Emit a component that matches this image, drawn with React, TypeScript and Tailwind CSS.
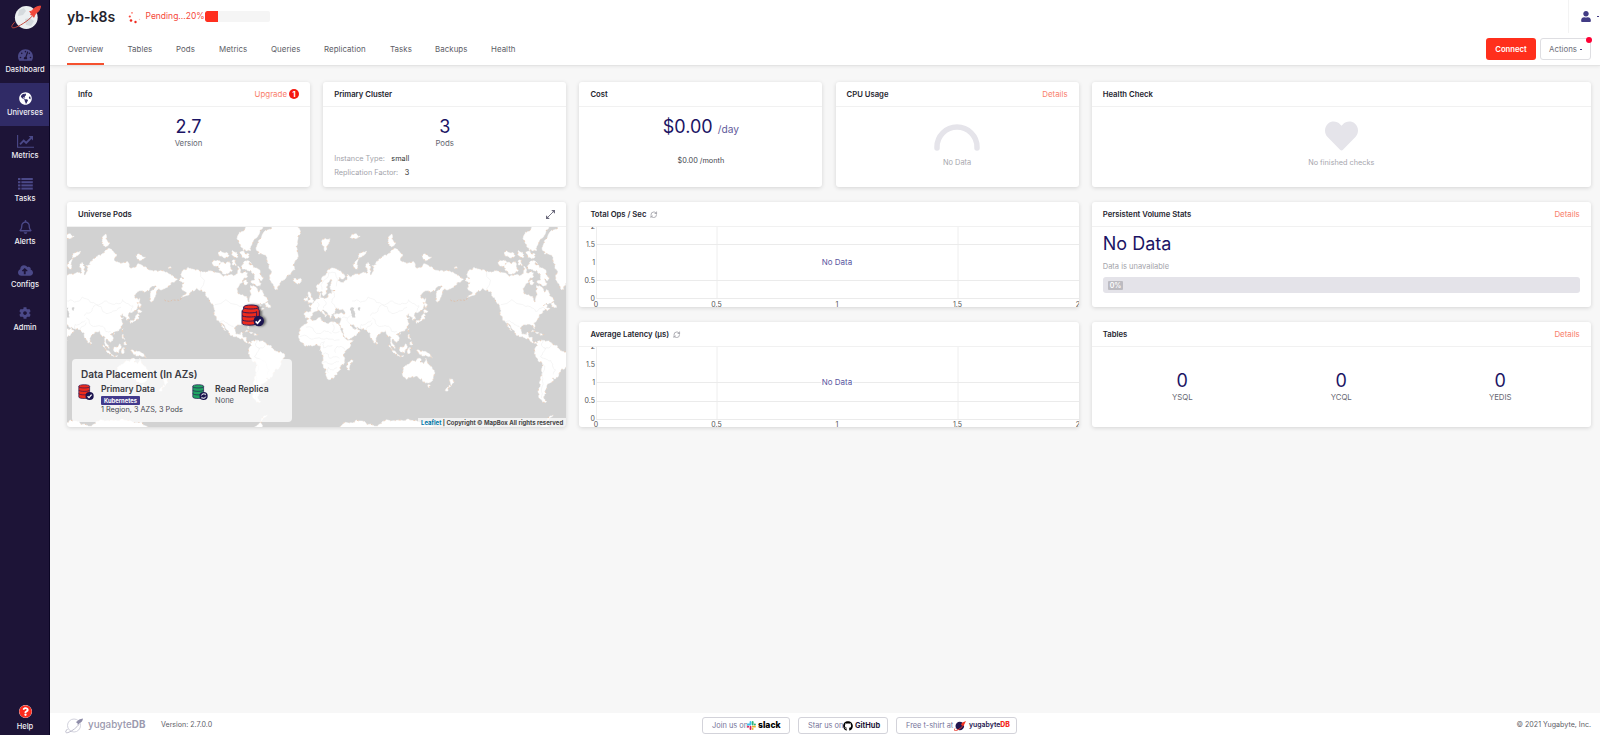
import React from "react";
import { FaTachometerAlt, FaGlobeAmericas, FaRegBell, FaCloudUploadAlt, FaCog, FaQuestionCircle, FaUser, FaHeart, FaGithub } from "react-icons/fa";
import { RefreshCw } from "lucide-react";

type Pt = [number, number];

const MAP_W = 499;
const MAP_H = 201;
const SCALE = 286 / 360;
const ORIGIN_X = 245.5;
const EQUATOR_Y = 122.5;
const RADIUS = 286 / (2 * Math.PI);

// Coastlines as flat "lon lat" lists, projected with Web Mercator.
const LAND: string[] = [
  // North and Central America
  "-168 65.6 -164 66.5 -162 66.2 -166 68.3 -161 70.3 -156.5 71.3 -150 70.5 -141 69.6 -135 69.3 -129 70 -124 69.5 -117 68.9 -114 67.8 -108 67.9 -104 68 -98 67.8 -96 68.3 -94 71.8 -91 69.5 -88 68.7 -85 69.7 -82 69 -82 67 -87 66.5 -88 64.3 -93 62 -94.5 60 -94.5 58.8 -92.5 57 -88 56.5 -82.5 55.2 -82 53 -80 51.3 -79 52 -79 54.5 -76.7 56.5 -78.4 58.8 -77.5 61 -78 62.4 -74 62.3 -70 61 -68 58.6 -65 60 -62 57.5 -61 55.8 -57.5 54.5 -56 52.3 -60 50.2 -66 50.2 -69 48.3 -65 48.8 -65 46.5 -61 45.5 -65 43.7 -67 45 -70.5 43.3 -70 41.7 -74 40.7 -75.5 38 -76 35.4 -81 32 -80 27 -81 25.2 -83 29.3 -85.5 29.8 -89.5 30 -94 29.5 -97.4 27.5 -97.8 22.5 -95.5 18.7 -91 18.8 -90 21.2 -87 21.4 -88.3 17.8 -88 15.8 -83.4 15 -83.7 11 -81.5 9 -79 9.5 -77 8.3 -78 7.5 -80 7.4 -83 8.3 -86 11 -88 13 -92.5 14.5 -96 15.8 -101 17.3 -105.5 20.3 -106 23 -109.5 26 -113 31 -114.7 31.7 -112 28 -109.5 23.2 -112 25.5 -114.5 28 -117 32.5 -120.5 34.5 -124 40 -124.3 47 -128 51 -130.5 54.5 -135 58.3 -140 59.8 -146 60.7 -151.5 59.3 -154 58 -161 55.3 -165 54.5 -158 57.8 -162 59 -165 61 -164 63.2 -161 64",
  // Greenland
  "-44 59.9 -48.5 61.2 -52 64 -53.7 67.2 -51 69.5 -54.5 70.8 -55 72.6 -58.5 75.5 -68 76 -71 77.5 -68 79.5 -62 81.2 -50 82.5 -34 83.6 -20 82.6 -15 81.4 -19 79.5 -19 76.5 -21 74 -24 72 -22 70.5 -27 68.5 -34 66.3 -39 65.2 -41.5 62.8",
  // Canadian Arctic
  "-62 67 -66 68.5 -68 70.5 -75 72 -80 73.7 -86 73.5 -89.5 71 -82 70 -78 70 -73 68 -73 65.5 -78 64.5 -72 63 -66 62.2 -65 63.5 -68 66 -64 65.2",
  "-105 73.5 -114 73.3 -118.5 71.5 -117 70 -113 68.6 -105 69 -101 70",
  "-125 72 -124.5 74 -119 74 -115.5 73.4 -120 71.5",
  "-92 76.5 -89 75 -80 75 -80 76 -86 76.5 -90 78 -95 80 -92 81.3 -80 83 -66 83 -62 82.3 -68 80.7 -75 79 -78 77 -85 77.3",
  "-118 75.5 -116 77 -108 76.5 -105 75.5 -110 74.7",
  "-95.5 72 -97 74 -101 73.8 -101 72.3", "-99 75 -101 77 -96 76.6 -94 75",
  "-80 73 -77 73 -77 72.4 -80 72.4", "-87 63.5 -84 65.9 -81 64 -84 62.8",
  "-59 47.7 -57 51.4 -53 48.5 -53 46.7",
  "-85 22 -81 23.2 -76 21 -74.5 20.2 -78 20 -82 22.3", "-74 18.2 -72.5 19.8 -68.5 18.6 -71.5 17.8",
  // South America
  "-77.5 8.3 -75 10.8 -72 12.2 -71.5 11 -68 11.3 -62 10.7 -60 8.5 -57 6 -52 4.8 -50 1 -48 -0.8 -44.5 -2.5 -40 -2.9 -35.3 -5.5 -35 -8.5 -39 -13.5 -39.5 -18 -41.5 -22.4 -46.5 -24.2 -48.7 -28 -52 -33 -54.5 -34.8 -58 -34.2 -57 -37 -62 -39 -65 -41 -65 -44 -67.5 -46 -66 -48 -69 -51 -68.5 -53 -65.5 -54.8 -70 -55.3 -74 -52.5 -75.5 -48 -73 -42 -73.6 -37 -71.5 -31 -70.3 -19 -76 -14 -79 -8 -81.2 -5 -80 -2.5 -80 1 -77.5 4",
  // Eurasia
  "-9.3 38.7 -9 43 -2 43.4 -1.3 46 -4.5 48.3 -1.5 48.8 2 51 5 53.3 8.5 54 8.3 57 10.6 57.6 10 54.8 14 54 19 54.5 21.5 57.5 24 57.5 24 59.2 29.5 60 23 60 21.5 61.5 25 65 22 65.7 17.5 61.5 18.5 60 16.5 57 14 55.5 12.5 56.5 11 59 8 58 5.5 59 5 62 10 64 14 67.5 19 70 25.5 71 31 70.2 41 67.3 39 66 33 66.7 35 64.3 38 64 40.5 65 44 66.2 44 68.3 47 67 53 68.5 60 68.5 65 69.2 68.5 68.3 67 71.5 70 73.2 73 71.5 72.5 68 74.5 68.3 75 72 80 72.3 81 73.6 87 75 95 76 104 77.6 113 76 110 74 118 73 127 73.5 130 71 140 72.7 150 71.5 160 69.8 170 70 177 69.3 185 67.2 190 66 186 64.3 179.5 62.5 171 60 164 59.8 163 57.5 162 55 157 51.1 156 57 163 62 157 61.7 154 59.4 142 59.2 135.5 54.6 141 53 140 48 135 43.5 130.5 42.3 127.5 39.5 129.5 36 126.5 34.5 126 37.5 121.5 39 121 40.8 118 39 122.5 37 119.5 35 122 31 119.5 26 116 23 110 21 107 20.5 106 18.5 109 13 107 10.5 105 8.8 105 10.5 100.8 13.3 99.3 11 100 8.5 103.4 4 103.7 1.3 101 3 98.4 8 98.5 12 97 17 94.3 16 91.8 22.5 88 21.7 85 19.7 80.2 15 80 12 77.5 8.1 74.5 13.5 72.8 20 70 21 67 24.5 61 25.2 57 26.8 50.5 30 48 30 51.5 25 54 24.2 56.3 26 59.8 22.4 55 17.5 45 12.8 43 14 39 21 35 28 34.2 31.3 36 36.5 31 36.5 27.5 37 26.5 40 29.5 41 35 42 41.5 41.7 37 45.2 34 44.6 31 46.7 28.5 44 28 41.5 24 40.6 23.8 38 22.5 36.6 20 39.8 19 42 13.7 45 12.4 44.3 18.3 40.2 16 38 15.5 40 10.5 43 8.8 44.4 3.5 43.3 -0.3 39.5 -2.3 36.8 -5.6 36.1 -9 37",
  // Africa
  "-5.9 35.8 -1.5 35.2 10 37.3 11 34 15 32.4 20 31 23 32.7 32.3 31.2 34.5 28 37.3 21 39.5 15.5 43 12 51.2 11.9 48 5 42 -1 39 -6 40.5 -11 40.5 -15 35 -20 35.4 -24 32.8 -26 31 -30 26 -34 18.5 -34.4 17 -29.5 14.5 -23 11.8 -17 13.7 -11 12 -5 9 -1 9.5 4 4.5 6.3 -2 5 -8 4.4 -13.2 9 -17.3 14.7 -16.5 20 -16 24 -9.8 30",
  "49.3 -12.2 50.4 -15.5 47 -25 44 -24.5 44 -17",
  // Oceania
  "113.7 -22.5 114 -26.5 115.7 -33 118 -35 124 -33 131 -31.5 135 -34.8 138 -35 140 -38 144 -38.5 147 -38.7 150 -37 153 -31 153 -25.5 149 -20.5 146 -18.5 143.5 -14 142.5 -11 141 -16 139.5 -17.5 135.5 -15 136.5 -12 132 -11.3 129.5 -14.8 126 -14 122 -18",
  "144.7 -41 148.3 -41 147 -43.5", "172.8 -34.5 178.4 -37.8 175 -41.5 174 -39.3", "172.7 -40.7 174 -42 170.5 -46 167 -46 168.5 -44",
  "131 -1 134 -0.8 138 -1.7 145 -4.5 150.5 -10.5 144 -7.8 138 -8 133 -4",
  // Indonesia and the Philippines
  "95.3 5.5 98 4 104 -2 106 -5.8 102 -4", "105.5 -6.5 108 -6.5 114.5 -7.7 114 -8.6 107 -7.6",
  "109 1.5 113 3 117 7 119 5 117.5 0 116 -4 111 -3", "119.5 0.5 125 1.6 121 0.5 123 -1 122 -5 119.6 -5.5",
  "120.3 16 121 18.5 122 18.3 122 14 124 12.7 121 13.7", "122 7 125 9.7 126.5 7 125 5.8",
  "80 9.7 82 7.5 80.5 6", "109 19 111 20 110 18.3", "120.2 23 121.5 25.2 121 22",
  // Japan
  "130 33 131 34.3 136 35.7 140 40.8 142 39.5 140.8 35.7 135.5 33.5 131 31.3", "140 42 142 45.4 145.5 43.3 143 42", "142 46.5 142.5 54.3 144.5 49 143 46.5",
  // Atlantic islands
  "-5.5 50 -3 53.4 -5 55 -5 58.5 -2 57.5 0 53 1.5 52.5 1 51", "-10 52 -10 54 -7 55.3 -6 53 -6.3 52.2",
  "-24 65.5 -22 66.4 -15 66.3 -13.6 65 -18.5 63.4 -22.5 64",
  // Arctic islands
  "52 71 54 73.5 58 76 68 76.8 60 75 56 72.5 57 70.7", "11 79 16 80 22 80 18 78 16 76.7", "95 79 100 81 105 79 100 78", "138 75.5 143 76 150 75 142 73.8", "47 80.3 55 81 60 80.5 54 80", "179 71.4 182 71.4 182 70.9 179 70.9",
  // Antarctica
  "35 -69 45 -67.5 55 -66 68 -68 78 -69 88 -66.8 110 -66 130 -66.3 145 -67 160 -69.8 165 -76 35 -76", "-75 -72 -68 -68 -64 -65 -57 -63.3 -60 -64.5 -65 -67.5 -62 -72",
];

const WATER: string[] = [
  "47 45 50 47 53 46.5 51 44.5 54 41 53.7 37 50 37.3 49 41",
  "57 46.5 60.5 46.5 60 44 58 44",
];

const BORDERS: string[] = [
  "-141 69.6 -141 60.3", "-123 49 -95 49 -89 48 -83 46 -79 43 -75 45 -70 47 -67 45", "-117 32.5 -107 31.5 -103 29 -97.5 26",
  "50 52 60 51 70 55 80 51 88 49 98 52 108 49.5 118 50 121 53 128 50 131 48 134 48 131 43",
  "88 49 96 43 105 42 113 44 119 47", "73 39 80 42 83 46 87 49", "75 37 79 32 87 28 96 28 100 22 106 22", "62 25 61 30 66 30 74 34", "68 24 71 28 75 32",
  "-70 12 -72 7 -67 2 -70 -4 -73 -9 -69 -11 -60 -14 -58 -20 -54 -25 -57 -30", "-70 -18 -68 -24 -70 -34 -72 -45 -72 -52", "-60 5 -64 2 -67 1",
  "25 31 25 22 34 22", "-8 27 5 20 15 23 24 20", "-16 16 -5 15 3 14 14 13 22 13 34 12", "12 -6 20 -6 22 -11 30 -9 34 -11", "12 -17 22 -18 28 -16 33 -15", "20 -28 20 -22 26 -25 31 -22", "29 -4 31 4 36 4 41 0", "10 5 15 10 14 2 25 5", "24 59 28 55 24 51 30 46", "7 44 8 48 6 51", "14 46 17 49 14 53", "12 60 14 65 20 69 29 69 30 62", "36 36 44 37 45 32 48 30", "45 37 48 39",
];

function parse(src: string): Pt[] {
  const n = src.split(" ").map(Number);
  const pts: Pt[] = [];
  for (let i = 0; i < n.length; i += 2) {
    const lat = (n[i + 1] * Math.PI) / 180;
    pts.push([ORIGIN_X + n[i] * SCALE, EQUATOR_Y - RADIUS * Math.log(Math.tan(Math.PI / 4 + lat / 2))]);
  }
  return pts;
}

// Splits each edge and shifts the middle sideways, so coasts look ragged.
function roughen(pts: Pt[], closed: boolean): Pt[] {
  let seed = 7;
  const rand = () => {
    seed = (seed * 16807) % 2147483647;
    return seed / 2147483647 - 0.5;
  };
  let out = pts;
  for (let pass = 0; pass < 2; pass++) {
    const next: Pt[] = [];
    out.forEach((a, i) => {
      next.push(a);
      if (!closed && i === out.length - 1) return;
      const b = out[(i + 1) % out.length];
      const k = rand() * 0.45;
      next.push([(a[0] + b[0]) / 2 - (b[1] - a[1]) * k, (a[1] + b[1]) / 2 + (b[0] - a[0]) * k]);
    });
    out = next;
  }
  return out;
}

function toPath(src: string, closed = true) {
  return "M" + roughen(parse(src), closed).map((p) => p[0].toFixed(1) + " " + p[1].toFixed(1)).join("L") + (closed ? "Z" : "");
}

const landPath = LAND.map((s) => toPath(s)).join("");
const waterPath = WATER.map((s) => toPath(s)).join("");
const borderPath = BORDERS.map((s) => toPath(s, false)).join("");
const aleutians = toPath("-165 54.3 -172 52.5 -180 51.5 -188 53", false);

function WorldMap() {
  return (
    <svg width={MAP_W} height={MAP_H} viewBox={`0 0 ${MAP_W} ${MAP_H}`} className="block">
      <rect width={MAP_W} height={MAP_H} fill="#d2d2d2" />
      {[-286, 0, 286].map((dx) => (
        <g key={dx} transform={`translate(${dx} 0)`}>
          <path d={landPath} fill="#fff" stroke="#fff" strokeWidth=".5" />
          <path d={landPath} fill="none" stroke="#e3b797" strokeWidth=".7" strokeDasharray="1 3 2 5 .5 4" opacity=".85" />
          <path d={waterPath} fill="#d2d2d2" />
          <path d={borderPath} fill="none" stroke="#ececec" strokeWidth=".5" />
          <path d={aleutians} fill="none" stroke="#dfb89c" strokeWidth=".7" strokeDasharray="2 1.5" />
        </g>
      ))}
    </svg>
  );
}

function DbIcon({ color, check, className }: { color: string; check: boolean; className: string }) {
  return (
    <svg viewBox="0 0 16 17" className={className}>
      <path d="M.8 2.2C.8.2 11.6.2 11.6 2.2V13c0 2-10.8 2-10.8 0z" fill={color} stroke="#2b1a55" strokeWidth=".7" />
      <path d="M.8 2.6c0 1.8 10.8 1.8 10.8 0M.8 6c0 1.8 10.8 1.8 10.8 0M.8 9.5c0 1.8 10.8 1.8 10.8 0" fill="none" stroke="#2b1a55" strokeWidth=".7" />
      <circle cx="11.6" cy="12" r="4.1" fill="#1c1550" />
      {check ? (
        <path d="M9.6 12.2l1.4 1.4 2.6-3" fill="none" stroke="#fff" strokeWidth="1.3" />
      ) : (
        <path d="M9.400 11.500a2.300 2.300 0 0 1 4-.8v-1M13.800 12.600a2.300 2.300 0 0 1-4 .8v1" fill="none" stroke="#fff" strokeWidth="1" />
      )}
    </svg>
  );
}

function MarkerIcon({ className }: { className: string }) {
  return (
    <svg viewBox="0 0 22 22" className={className}>
      <path d="M2.500 3C2.500.3 16.500.3 16.500 3v2.200c1 .5 1 1 1 1.800V15H1V7c0-.8.2-1.300 1.500-1.800z" fill="#ef2b1d" stroke="#2b1a55" strokeWidth=".9" />
      <path d="M1 15v3.500c0 2.300 13.500 2.300 13.500 0L17.500 15V7" fill="#ef2b1d" stroke="#2b1a55" strokeWidth=".9" />
      <path d="M2.500 3.400c1 1.800 13 1.800 14 0M1 7c1 2 13.500 2 14 .3V16M1 11c1 1.800 12 1.800 14 .5M1 15c1 1.800 11 1.800 13 .5" fill="none" stroke="#2b1a55" strokeWidth=".9" />
      <circle cx="17" cy="16.300" r="5" fill="#1c1550" />
      <path d="M14 16.600l1.800 1.800 3-3.500" fill="none" stroke="#fff" strokeWidth="1.600" />
    </svg>
  );
}

function ListIcon({ className }: { className?: string }) {
  return (
    <svg viewBox="0 0 15 12" className={className} fill="currentColor">
      {[0, 3.2, 6.4, 9.6].map((y) => (
        <g key={y}>
          <rect x="0" y={y} width="2.400" height="2" />
          <rect x="3.400" y={y} width="11.400" height="2" />
        </g>
      ))}
    </svg>
  );
}

function LineChartIcon({ className }: { className?: string }) {
  return (
    <svg viewBox="0 0 17 13" className={className} fill="none" stroke="currentColor">
      <path d="M.6 0V12.300H17" strokeWidth="1.100" />
      <path d="M3 9.300l3.700-3.800 2.500 2.400 4.800-4.800" strokeWidth="1.900" />
      <path d="M11.600 1H16v4.400z" fill="currentColor" stroke="none" />
    </svg>
  );
}

const NAV = [
  { label: "Dashboard", icon: <FaTachometerAlt className="h-[14px] w-[15px]" /> },
  { label: "Universes", icon: <FaGlobeAmericas className="h-[13px] w-[13px]" />, active: true },
  { label: "Metrics", icon: <LineChartIcon className="h-[13px] w-[17px]" /> },
  { label: "Tasks", icon: <ListIcon className="h-[12px] w-[15px]" /> },
  { label: "Alerts", icon: <FaRegBell className="h-[14px] w-[13px]" /> },
  { label: "Configs", icon: <FaCloudUploadAlt className="h-[15px] w-[15px]" /> },
  { label: "Admin", icon: <FaCog className="h-[12px] w-[12px]" /> },
];

function Sidebar() {
  return (
    <aside className="flex w-[50px] shrink-0 flex-col border-r border-[#0b0524] bg-[#1d1437]">
      <div className="flex h-[39.500px] justify-center pt-[5px] pl-[2px]">
        <svg viewBox="0 0 30 25" className="h-[25px] w-[30px]">
          <circle cx="15.300" cy="12.500" r="11.400" fill="#eceff1" />
          <path d="M8 5l5-2 2 3-3 4-5 1zM14 14l5-1 4 3-3 5-5-1z" fill="#d5dade" />
          <path d="M3.600 17.200C-.5 21.500 0 23.800 4.500 22.400 11 20 19.500 14 23.500 8.500" fill="none" stroke="#c3473c" strokeWidth="1" />
          <path d="M29.500 1C25 1.400 22.500 3.600 20.600 6.200l-2 .5 1.600 1.400-.4 1.800 2 .1 1 2.300 1.500-3.400C27.500 6.800 29.200 4.500 29.500 1z" fill="#f0483b" stroke="#f0483b" />
        </svg>
      </div>
      {NAV.map((n) => (
        <div key={n.label} className={n.active ? "flex h-[43px] flex-col items-center bg-[#302b66] text-white" : "flex h-[43px] flex-col items-center text-[#4b4988]"}>
          <div className="mt-[8px] flex h-[15px] items-center pl-[1px]">{n.icon}</div>
          <span className="mt-[2.500px] pl-[1px] text-[7.500px] leading-[10px] font-medium text-[#f1f0f6]">{n.label}</span>
        </div>
      ))}
      <div className="mt-auto flex flex-col items-center pb-[3px] pl-[1px]">
        <FaQuestionCircle className="h-[13px] w-[13px] rounded-full bg-white text-[#fb2a1c]" />
        <span className="mt-[4px] text-[7.500px] leading-[10px] font-medium text-[#f1f0f6]">Help</span>
      </div>
    </aside>
  );
}

const TABS = [
  { label: "Overview", w: "w-[59.500px]" },
  { label: "Tables", w: "w-[48.500px]" },
  { label: "Pods", w: "w-[43px]" },
  { label: "Metrics", w: "w-[52px]" },
  { label: "Queries", w: "w-[53px]" },
  { label: "Replication", w: "w-[66px]" },
  { label: "Tasks", w: "w-[45px]" },
  { label: "Backups", w: "w-[56px]" },
  { label: "Health", w: "w-[40px]" },
];

function Header() {
  return (
    <header className="z-10 flex h-[66px] shrink-0 flex-col border-b border-[#e4e4e4] bg-white shadow-[0_1px_3px_rgba(0,0,0,0.06)]">
      <div className="flex h-[33px] items-center pl-[17px]">
        <h1 className="w-[61px] text-[14px] font-semibold text-[#24232c]">yb-k8s</h1>
        <svg viewBox="0 0 13 13" className="mt-[1px] h-[13px] w-[13px]">
          <circle cx="4" cy="1.800" r=".9" fill="#ff7a6e" />
          <circle cx="1.800" cy="5.500" r="1.100" fill="#f8483c" />
          <circle cx="3" cy="9.500" r="1.300" fill="#f02b20" />
          <circle cx="7.500" cy="11" r="1.200" fill="#f02b20" />
          <circle cx="11.500" cy="8.500" r=".7" fill="#fbc4bf" />
        </svg>
        <span className="ml-[4.500px] w-[59.500px] text-[8.500px] whitespace-nowrap text-[#f5483a]">Pending...20%</span>
        <div className="h-[11px] w-[65px] overflow-hidden rounded-[2px] bg-[#f5f5f5]">
          <div className="h-full w-[13px] rounded-l-[2px] bg-[#ff2f1f]" />
        </div>
        <div className="ml-auto flex h-[33px] w-[32px] items-center border-l border-[#f3f3f3] pl-[12px] text-[#423c85]">
          <FaUser className="h-[11px] w-[10px]" />
          <span className="ml-[6px] h-[1.500px] w-[2px] bg-[#423c85]" />
        </div>
      </div>
      <div className="flex h-[32px] pr-[9px] pl-[17px]">
        {TABS.map((t, i) => (
          <div key={t.label} className={t.w}>
            <div className={i === 0 ? "h-[32px] w-[37px] border-b-2 border-[#f5512f] pt-[11px] text-center" : "pt-[11px] pl-[1px]"}>
              <span className="block text-[7.900px] leading-[10px] tracking-[0.050px] text-[#5c5d66]">{t.label}</span>
            </div>
          </div>
        ))}
        <div className="ml-auto flex gap-[4px] pt-[5px]">
          <button className="h-[22px] w-[50px] rounded-[3px] bg-[#ff2f1c] pt-[1px] text-[7.700px] font-semibold text-white">Connect</button>
          <div className="relative flex h-[22px] w-[51px] items-center justify-center gap-[3px] rounded-[3px] border border-[#dedee2] pt-[1px] text-[7.900px] text-[#6c6d78]">
            Actions
            <span className="h-[1.500px] w-[2px] bg-[#423c85]" />
            <span className="absolute -top-[2px] -right-[2px] h-[6px] w-[6px] rounded-full bg-[#ff0034]" />
          </div>
        </div>
      </div>
    </header>
  );
}

function Card({ title, link, extra, className, children }: { title: React.ReactNode; link?: React.ReactNode; extra?: React.ReactNode; className: string; children: React.ReactNode }) {
  return (
    <section className={"flex flex-col overflow-hidden rounded-[3px] bg-white shadow-[0_1px_4px_rgba(0,0,0,0.14)] " + className}>
      <div className="flex h-[25px] shrink-0 items-center border-b border-[#f1f1f1] px-[11px] pt-[1px] text-[7.900px]">
        <h2 className="text-[7.700px] font-semibold text-[#24242e]">{title}</h2>
        {extra}
        <div className="ml-auto flex items-center text-[#f9806c]">{link}</div>
      </div>
      {children}
    </section>
  );
}

function Stat({ value, label }: { value: string; label: string }) {
  return (
    <div className="flex flex-col items-center">
      <span className="text-[18px] leading-[20px] text-[#1b1464]">{value}</span>
      <span className="text-[7.800px] leading-[13px] text-[#666772]">{label}</span>
    </div>
  );
}

function Chart({ lines, labels }: { lines: number[]; labels: number[] }) {
  return (
    <svg width="500" height="80" viewBox="0 0 500 80" className="block text-[7px]" fill="#555">
      <path d="M17.500 0V72M138 0V72M379 0V72" stroke="#eeeeee" />
      {lines.map((y) => (
        <path key={y} d={`M17 ${y}.5H500`} stroke="#ebebeb" />
      ))}
      <g textAnchor="end">
        <text x="16" y="2.300">2</text>
        {["1.5", "1", "0.5", "0"].map((t, i) => (
          <text key={t} x="16" y={labels[i] + 2.3}>{t}</text>
        ))}
      </g>
      <g textAnchor="middle">
        {["0", "0.5", "1", "1.5", "2"].map((t, i) => (
          <text key={t} x={17 + i * 120.5} y="79.500">{t}</text>
        ))}
        <rect x="242" y="30" width="32" height="12" fill="#fff" />
        <text x="258" y="38" fontSize="8" fill="#5a56a0">No Data</text>
      </g>
    </svg>
  );
}

const refresh = <RefreshCw className="ml-[4px] h-[7.500px] w-[7.500px] text-[#9a9aa2]" strokeWidth={2.5} />;

function MapCard() {
  return (
    <Card
      title="Universe Pods"
      className="col-span-2 row-span-2"
      link={
        <svg viewBox="0 0 9 9" className="-mt-[1px] h-[9px] w-[9px]" fill="#6b6a7c">
          <path d="M5.200 0H9V3.800zM0 5.200V9H3.800z" />
          <path d="M1.500 7.500l6-6" stroke="#6b6a7c" strokeWidth=".9" />
        </svg>
      }
    >
      <div className="relative h-[200px]">
        <WorldMap />
        <MarkerIcon className="absolute top-[77px] left-[174px] h-[23px] w-[23px] drop-shadow-[2px_0px_1px_rgba(0,0,0,0.5)]" />
        <div className="absolute top-[132px] left-[5px] flex h-[63px] w-[220px] flex-col rounded-[4px] bg-white/75 pt-[8px] pl-[9px]">
          <h3 className="text-[10px] leading-[14px] font-semibold text-[#3a3a42]">Data Placement (In AZs)</h3>
          <div className="mt-[2px] flex">
            <DbIcon color="#ef2b1d" check className="mt-[1px] -ml-[3px] h-[17px] w-[16px]" />
            <div className="ml-[7px] flex w-[91px] flex-col items-start">
              <h4 className="text-[8.600px] leading-[12px] font-semibold text-[#3a3a42]">Primary Data</h4>
              <span className="mt-[1px] h-[9px] rounded-[1px] bg-[#423a8c] px-[3px] text-[5.800px] leading-[9px] font-bold text-white">Kubernetes</span>
              <span className="text-[7.300px] leading-[10px] text-[#44454d]">1 Region, 3 AZS, 3 Pods</span>
            </div>
            <DbIcon color="#1fa463" check={false} className="mt-[1px] h-[17px] w-[16px]" />
            <div className="ml-[7px] flex flex-col">
              <h4 className="text-[8.600px] leading-[12px] font-semibold text-[#3a3a42]">Read Replica</h4>
              <span className="text-[7.500px] leading-[12px] text-[#55565e]">None</span>
            </div>
          </div>
        </div>
        <div className="absolute right-0 bottom-0 h-[9px] bg-white/70 px-[3px] text-[6px] leading-[9.500px] font-bold whitespace-nowrap text-[#444]">
          <span className="text-[#0078a8]">Leaflet</span> | Copyright © MapBox All rights reserved
        </div>
      </div>
    </Card>
  );
}

function Footer() {
  const btn = "flex h-[17px] items-center rounded-[3px] border border-[#d3d3da] text-[7.400px] text-[#76749a]";
  return (
    <footer className="flex h-[22px] shrink-0 items-center bg-white pt-[3px] pr-[9px] pl-[15px] text-[7.100px] text-[#5c5d66]">
      <svg viewBox="0 0 18 16" className="h-[16px] w-[18px]">
        <circle cx="9" cy="7.500" r="6.500" fill="#fff" stroke="#c7c6d4" strokeWidth=".8" />
        <path d="M2.500 11C-.5 14 .5 15.700 4 14.200 8 12.500 11.500 9.500 14 6.500" fill="none" stroke="#aeadc0" strokeWidth=".8" />
        <path d="M18 .5C15 .8 13 2 12 3.500l-1.300.4 1.800 1.300.3 2 1.400-1.700C16.500 4.500 17.800 2.700 18 .5z" fill="#8e8ca8" />
      </svg>
      <span className="ml-[5px] w-[73px] text-[9.800px] font-medium text-[#9a99ae]">yugabyte<b className="font-bold">DB</b></span>
      <span className="w-[541px]">Version: 2.7.0.0</span>
      <div className="flex gap-[8px]">
        <div className={btn + " w-[88px] pl-[9px]"}>
          <span className="w-[35px] whitespace-nowrap">Join us on</span>
          <svg viewBox="0 0 9 9" className="h-[9px] w-[9px]" strokeWidth="1.800" strokeLinecap="round">
            <path d="M3.500 1V3.300M1 3.500H3.300" stroke="#36c5f0" />
            <path d="M5.700 1V3.500M8 3.500H7.800" stroke="#2eb67d" />
            <path d="M5.700 5.700H8M5.700 8V7.800" stroke="#ecb22e" />
            <path d="M3.500 5.700V8M1 5.700H1.200" stroke="#e01e5a" />
          </svg>
          <span className="ml-[2px] text-[8.600px] font-extrabold text-black">slack</span>
        </div>
        <div className={btn + " w-[90px] pl-[9px]"}>
          <span className="w-[35px] whitespace-nowrap">Star us on</span>
          <FaGithub className="h-[10px] w-[10px] text-black" />
          <span className="ml-[2px] text-[7.400px] font-bold text-[#1d1437]">GitHub</span>
        </div>
        <div className={btn + " w-[121px] pl-[9px]"}>
          <span className="w-[48px] whitespace-nowrap">Free t-shirt at</span>
          <svg viewBox="0 0 12 10" className="h-[10px] w-[12px]">
            <circle cx="5.800" cy="5" r="4.300" fill="#22164f" />
            <path d="M1 7.500C-.5 9.800 1 10 3 9.200 6 8 8 6 9.500 4" fill="none" stroke="#e93a2d" strokeWidth="1" />
            <path d="M12 0L8 1.800 7 4l2.500 1z" fill="#f0311f" />
          </svg>
          <span className="ml-[3px] text-[6.900px] font-semibold text-[#22164f]">yugabyte<b className="font-extrabold text-[#f5261a]">DB</b></span>
        </div>
      </div>
      <span className="ml-auto">© 2021 Yugabyte, Inc.</span>
    </footer>
  );
}

export default function App() {
  return (
    <div className="flex h-[735px] w-[1600px] overflow-hidden bg-[#f7f7f7] font-['Inter','Liberation_Sans',sans-serif]">
      <Sidebar />
      <div className="flex min-w-0 flex-1 flex-col">
        <Header />
        <main className="flex-1 pt-[16px] pl-[17px]">
          <div className="grid grid-cols-[243px_243px_243px_243px_499px] grid-rows-[105px_105px_105px] gap-x-[13.200px] gap-y-[15px]">
            <Card
              title="Info"
              className=""
              link={
                <>
                  Upgrade
                  <span className="ml-[2px] flex h-[10px] w-[10px] items-center justify-center rounded-full bg-[#f5190f] text-[8px] font-bold text-white">1</span>
                </>
              }
            >
              <div className="pt-[10px]">
                <Stat value="2.7" label="Version" />
              </div>
            </Card>
            <Card title="Primary Cluster" className="">
              <div className="pt-[10px]">
                <Stat value="3" label="Pods" />
                <div className="flex flex-col pt-[2px] pl-[11px] text-[7.300px] leading-[14px] text-[#a3a3aa]">
                  <span>Instance Type: <span className="ml-[4.500px] text-[#333]">small</span></span>
                  <span>Replication Factor: <span className="ml-[4.500px] text-[#333]">3</span></span>
                </div>
              </div>
            </Card>
            <Card title="Cost" className="">
              <div className="flex flex-col items-center pt-[10px] text-[#1b1464]">
                <span className="text-[18px] leading-[20px]">$0.00 <span className="text-[10.200px] text-[#5f5a9a]">/day</span></span>
                <span className="mt-[15px] text-[7.300px] leading-[14px] text-[#44454d]">$0.00 /month</span>
              </div>
            </Card>
            <Card title="CPU Usage" link="Details" className="">
              <div className="flex flex-col items-center pt-[17px] text-[7.400px] leading-[12px] text-[#a6a6ad]">
                <svg viewBox="0 0 46 27" className="h-[27px] w-[46px]">
                  <path d="M3 24V23A20 20 0 0 1 43 23V24" fill="none" stroke="#e5e4ea" strokeWidth="5.500" strokeLinecap="round" />
                </svg>
                <span className="mt-[5.500px]">No Data</span>
              </div>
            </Card>
            <Card title="Health Check" className="">
              <div className="flex flex-col items-center pt-[12px] text-[7.300px] leading-[12px] text-[#a6a6ad]">
                <FaHeart className="h-[34px] w-[33px] text-[#e5e4ea]" />
                <span className="mt-[3.500px]">No finished checks</span>
              </div>
            </Card>
            <MapCard />
            <Card title="Total Ops / Sec" extra={refresh} className="col-span-2">
              <Chart lines={[17, 53, 71]} labels={[17.5, 35.5, 53.5, 71.5]} />
            </Card>
            <Card title="Persistent Volume Stats" link="Details" className="">
              <div className="flex flex-col px-[11px] pt-[6px]">
                <span className="text-[18px] leading-[22px] text-[#1b1464]">No Data</span>
                <span className="mt-[5.500px] text-[7.500px] leading-[12px] text-[#a3a3aa]">Data is unavailable</span>
                <div className="mt-[4.500px] flex h-[16px] items-center rounded-[3px] bg-[#e4e3e9] pl-[5px]">
                  <span className="h-[9px] rounded-[1px] bg-[#bcbbc1] px-[2px] text-[7px] leading-[9.500px] font-semibold text-white">0%</span>
                </div>
              </div>
            </Card>
            <Card title="Average Latency (µs)" extra={refresh} className="col-span-2">
              <Chart lines={[35, 54, 72]} labels={[17.5, 35.5, 54, 72]} />
            </Card>
            <Card title="Tables" link="Details" className="">
              <div className="grid grid-cols-3 px-[11px] pt-[24px]">
                <Stat value="0" label="YSQL" />
                <Stat value="0" label="YCQL" />
                <Stat value="0" label="YEDIS" />
              </div>
            </Card>
          </div>
        </main>
        <Footer />
      </div>
    </div>
  );
}
